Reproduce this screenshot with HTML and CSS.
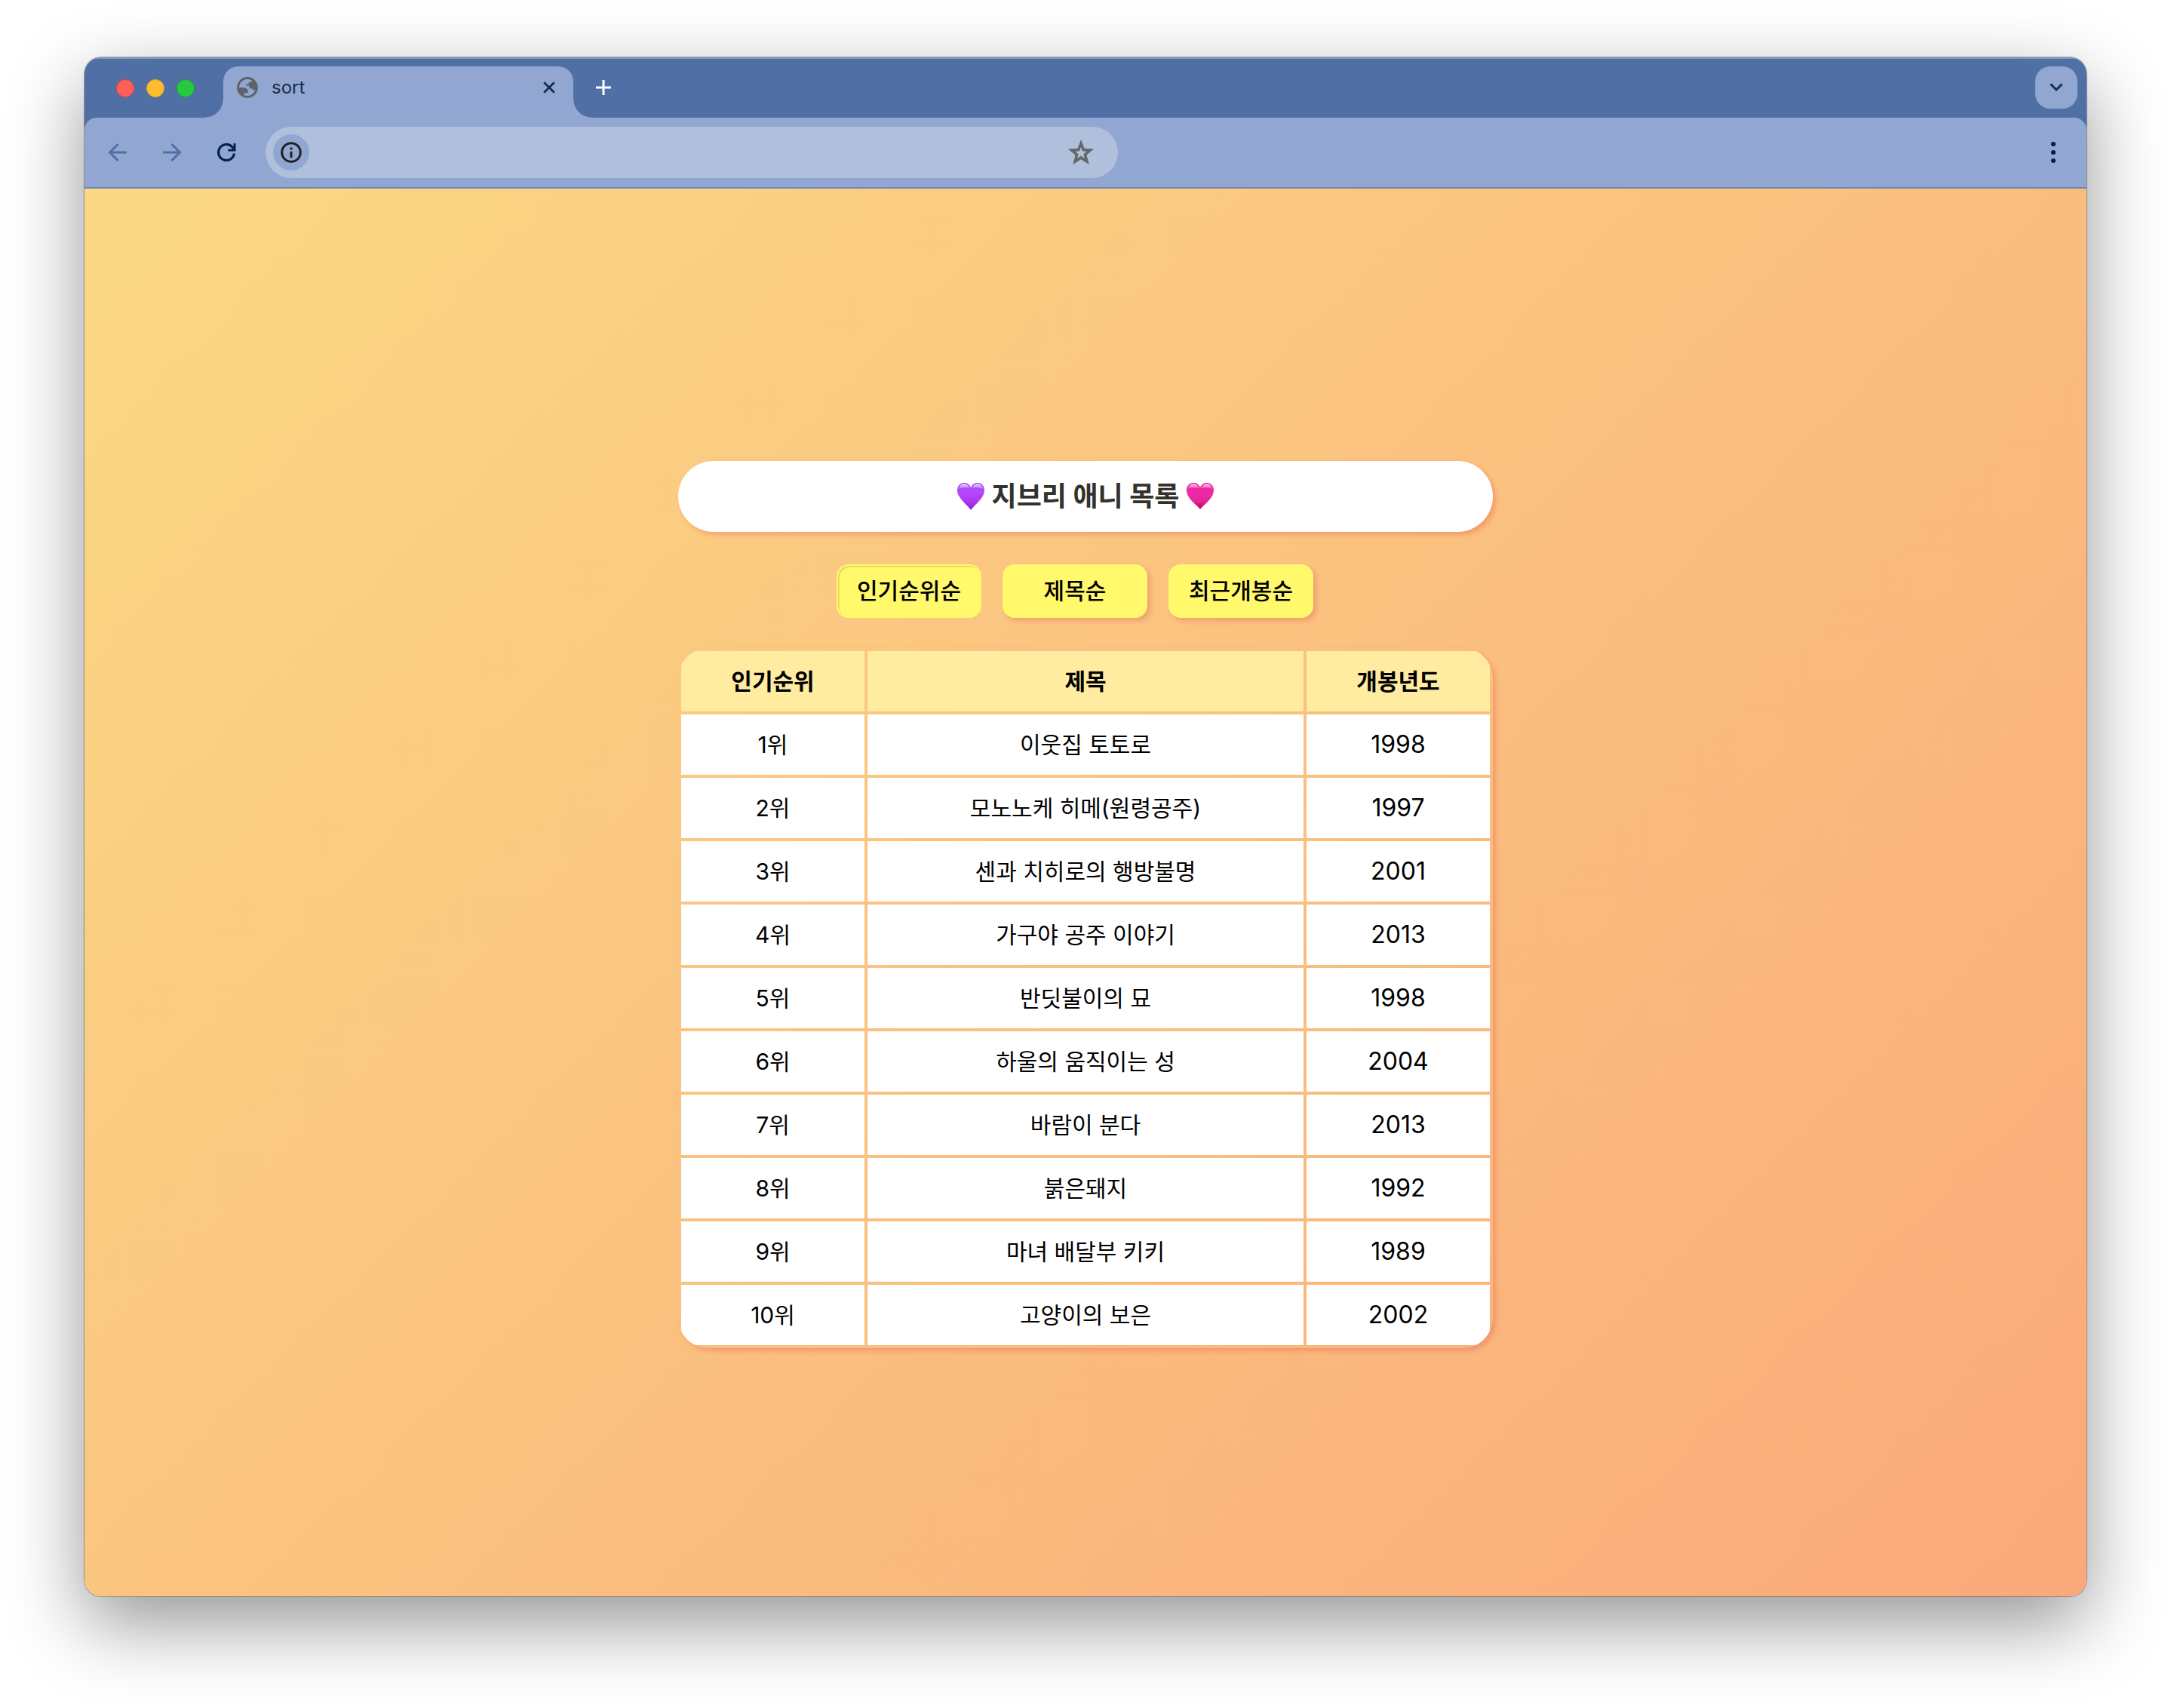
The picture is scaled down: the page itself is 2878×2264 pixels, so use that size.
FILE: index.html
```html
<!DOCTYPE html>
<html lang="ko">
<head>
<meta charset="utf-8">
<meta name="viewport" content="width=device-width, initial-scale=1">
<title>sort</title>
<link rel="stylesheet" href="styles.css">
</head>
<body>
<div class="window">
  <header class="chrome">
    <div class="tabbar">
      <div class="lights">
        <span class="light light-red"></span>
        <span class="light light-yellow"></span>
        <span class="light light-green"></span>
      </div>
      <div class="tab">
        <svg class="globe" viewBox="0 0 28 28" aria-hidden="true">
          <circle cx="14" cy="14" r="12.4" fill="none" stroke="currentColor" stroke-width="3"/>
          <path fill="currentColor" d="M1.500 14h7.200q5.800.200 6 5v2.300h-5v4.200C5 24 2 19.500 1.500 14zM20 3v1.600q-.300 2.400-3 2.400h-1.500v2.500h-3.300v2.300h4.300v3.400h2.300q2 0 2.800 2.300h2.900c2.500-5 1.500-11-4.500-14.500z"/>
        </svg>
        <span class="tab-title">sort</span>
        <button class="icon-button tab-close" type="button" aria-label="탭 닫기">
          <svg width="16" height="16" viewBox="0 0 16 16"><path d="M1.200 1.200l13.600 13.600M14.800 1.200L1.200 14.800" fill="none" stroke="currentColor" stroke-width="2.800"/></svg>
        </button>
      </div>
      <button class="icon-button new-tab" type="button" aria-label="새 탭">
        <svg width="20" height="20" viewBox="0 0 20 20"><path d="M10 0v20M0 10h20" fill="none" stroke="currentColor" stroke-width="3"/></svg>
      </button>
      <button class="icon-button tab-search" type="button" aria-label="탭 검색">
        <svg width="18" height="12" viewBox="0 0 18 12"><path d="M1.500 1.500L9 9l7.500-7.500" fill="none" stroke="currentColor" stroke-width="3"/></svg>
      </button>
    </div>
    <div class="toolbar">
      <button class="icon-button nav-button muted" type="button" aria-label="뒤로">
        <svg width="26" height="26" viewBox="0 0 26 26"><path d="M25 13H3M13.500 2L2.500 13l11 11" fill="none" stroke="currentColor" stroke-width="3"/></svg>
      </button>
      <button class="icon-button nav-button muted" type="button" aria-label="앞으로">
        <svg width="26" height="26" viewBox="0 0 26 26"><path d="M1 13h22M12.500 2l11 11-11 11" fill="none" stroke="currentColor" stroke-width="3"/></svg>
      </button>
      <button class="icon-button nav-button" type="button" aria-label="새로고침">
        <svg width="26" height="26" viewBox="0 0 26 26"><path d="M23.500 14.500A10.500 10.500 0 1 1 20.600 5.600L23 8" fill="none" stroke="currentColor" stroke-width="3.200"/><path d="M25.500 1v10.500H15.300V8.700h7.200V1z" fill="currentColor"/></svg>
      </button>
      <div class="address">
        <button class="icon-button site-info" type="button" aria-label="사이트 정보">
          <svg width="28" height="28" viewBox="0 0 28 28"><circle cx="14" cy="14" r="12.300" fill="none" stroke="currentColor" stroke-width="3"/><path d="M12.500 12.700h3V21h-3zM12.500 7.500h3v3h-3z" fill="currentColor"/></svg>
        </button>
        <input class="address-input" type="text" aria-label="주소">
        <button class="icon-button bookmark" type="button" aria-label="북마크">
          <svg width="34" height="34" viewBox="0 0 34 34"><path fill="currentColor" fill-rule="evenodd" d="M17 0l4.500 11.700 12.500.900-9.600 7.900 3.300 12.500L17 26.300 6.300 33l3.300-12.500L0 12.600l12.500-.900zM17 10l-2.200 5.200-5.300.500 4 3.600-1.200 5.500 4.700-3 4.700 3-1.200-5.500 4-3.600-5.300-.500z"/></svg>
        </button>
      </div>
      <button class="icon-button nav-button menu-button" type="button" aria-label="메뉴">
        <svg width="6" height="28" viewBox="0 0 6 28" fill="currentColor"><circle cx="3" cy="3" r="3"/><circle cx="3" cy="14" r="3"/><circle cx="3" cy="25" r="3"/></svg>
      </button>
    </div>
  </header>
  <main class="page">
    <div class="content">
      <h1 class="title">
        <svg class="heart" viewBox="0 0 36 36" aria-hidden="true">
          <defs>
            <linearGradient id="purple" x1="0" y1="0" x2="0" y2="1"><stop offset="0" stop-color="#a34df0"/><stop offset=".35" stop-color="#b548fb"/><stop offset=".7" stop-color="#ae36f0"/><stop offset="1" stop-color="#8420cc"/></linearGradient>
            <linearGradient id="shine" x1="0" y1="0" x2="0" y2="1"><stop offset="0" stop-color="#fff" stop-opacity=".8"/><stop offset="1" stop-color="#fff" stop-opacity="0"/></linearGradient>
          </defs>
          <path fill="url(#purple)" d="M18 36C12 28 0 20 0 10 0 4 4 0 9 0c4.500 0 7.600 2.600 9 6.500C19.400 2.600 22.500 0 27 0c5 0 9 4 9 10 0 10-12 18-18 26z"/>
          <path fill="url(#shine)" d="M2 9c0-4.500 3-7.500 7-7.500s6.500 2.500 7.500 6.500C13 6 6 6 2 9zM34 9c0-4.500-3-7.500-7-7.500S20.500 4 19.500 8C23 6 30 6 34 9z"/>
        </svg>
        <span>지브리 애니 목록</span>
        <svg class="heart" viewBox="0 0 36 36" aria-hidden="true">
          <defs>
            <linearGradient id="pink" x1="0" y1="0" x2="0" y2="1"><stop offset="0" stop-color="#e81fa0"/><stop offset=".4" stop-color="#ef29a9"/><stop offset=".7" stop-color="#e2259a"/><stop offset="1" stop-color="#c00060"/></linearGradient>
          </defs>
          <path fill="url(#pink)" d="M18 35C12 28 0 20 0 10 0 4 4 0 9 0c4.500 0 7.600 2.600 9 6.500C19.400 2.600 22.500 0 27 0c5 0 9 4 9 10 0 10-12 18-18 25z"/>
          <path fill="url(#shine)" d="M2 9c0-4.500 3-7.500 7-7.500s6.500 2.500 7.500 6.500C13 6 6 6 2 9zM34 9c0-4.500-3-7.500-7-7.500S20.500 4 19.500 8C23 6 30 6 34 9z"/>
        </svg>
      </h1>
      <div class="sort-buttons">
        <button class="sort-button active" type="button">인기순위순</button>
        <button class="sort-button" type="button">제목순</button>
        <button class="sort-button" type="button">최근개봉순</button>
      </div>
      <table class="list">
        <colgroup><col class="col-side"><col><col class="col-side"></colgroup>
        <thead>
          <tr><th scope="col">인기순위</th><th scope="col">제목</th><th scope="col">개봉년도</th></tr>
        </thead>
        <tbody>
          <tr><td>1위</td><td>이웃집 토토로</td><td>1998</td></tr>
          <tr><td>2위</td><td>모노노케 히메(원령공주)</td><td>1997</td></tr>
          <tr><td>3위</td><td>센과 치히로의 행방불명</td><td>2001</td></tr>
          <tr><td>4위</td><td>가구야 공주 이야기</td><td>2013</td></tr>
          <tr><td>5위</td><td>반딧불이의 묘</td><td>1998</td></tr>
          <tr><td>6위</td><td>하울의 움직이는 성</td><td>2004</td></tr>
          <tr><td>7위</td><td>바람이 분다</td><td>2013</td></tr>
          <tr><td>8위</td><td>붉은돼지</td><td>1992</td></tr>
          <tr><td>9위</td><td>마녀 배달부 키키</td><td>1989</td></tr>
          <tr><td>10위</td><td>고양이의 보은</td><td>2002</td></tr>
        </tbody>
      </table>
    </div>
  </main>
</div>
</body>
</html>
```
FILE: styles.css
```css
* {
  box-sizing: border-box;
}

body {
  margin: 0;
  min-height: 100vh;
  padding: 76px 112px 148px;
  display: flex;
  background: #fff;
  color: #000;
  font-family: Inter, "Noto Sans CJK KR", sans-serif;
  font-size: 30px;
}

button {
  margin: 0;
  padding: 0;
  border: 0;
  background: none;
  color: inherit;
  font: inherit;
}

.window {
  flex: 1;
  min-width: 0;
  display: flex;
  flex-direction: column;
  overflow: hidden;
  border-radius: 22px;
  box-shadow: 0 0 0 1px rgba(0, 0, 0, .3), 0 36px 100px rgba(0, 0, 0, .42);
}

/* Browser chrome */

.chrome {
  background: #506fa5;
  color: #00204f;
  box-shadow: inset 0 2px 0 #8298c0;
}

.tabbar {
  display: flex;
  align-items: flex-start;
  padding: 12px 12px 0 42px;
}

.icon-button {
  display: flex;
  flex: none;
  align-items: center;
  justify-content: center;
}

.lights {
  display: flex;
  align-items: center;
  gap: 16px;
  height: 58px;
}

.light {
  width: 24px;
  height: 24px;
  border: 1px solid;
  border-radius: 50%;
}

.light-red {
  background: #ff5f57;
  border-color: #e2463f;
}

.light-yellow {
  background: #febc2e;
  border-color: #dfa023;
}

.light-green {
  background: #28c840;
  border-color: #1aab29;
}

.tab {
  position: relative;
  display: flex;
  align-items: center;
  width: 464px;
  height: 68px;
  margin-left: 38px;
  padding: 0 24px 12px 18px;
  border-radius: 20px 20px 0 0;
  background: #91a7d1;
  color: #1b2c4b;
}

/* Concave feet of the active tab */
.tab::before,
.tab::after {
  content: "";
  position: absolute;
  bottom: 0;
  width: 24px;
  height: 24px;
}

.tab::before {
  right: 100%;
  background: radial-gradient(circle at 0 0, transparent 23px, #91a7d1 24px);
}

.tab::after {
  left: 100%;
  background: radial-gradient(circle at 100% 0, transparent 23px, #91a7d1 24px);
}

.globe {
  flex: none;
  width: 28px;
  height: 28px;
  color: #5f6368;
}

.tab-title {
  flex: 1;
  margin-left: 18px;
  font-size: 24px;
  line-height: 28px;
}

.new-tab {
  width: 56px;
  height: 56px;
  margin-left: 12px;
  color: #fff;
}

.tab-search {
  width: 56px;
  height: 56px;
  margin-left: auto;
  border-radius: 20px;
  background: #91a7d1;
  color: #1b2c4b;
}

.toolbar {
  display: flex;
  align-items: center;
  gap: 24px;
  padding: 12px 20px;
  border-bottom: 2px solid #6d88b5;
  border-radius: 16px 16px 0 0;
  background: #91a7d1;
}

.nav-button {
  width: 48px;
  height: 48px;
}

.muted {
  color: #506fa5;
}

.address {
  display: flex;
  align-items: center;
  flex: 0 1 1130px;
  min-width: 0;
  height: 68px;
  margin-left: 4px;
  padding: 0 32px 0 10px;
  border-radius: 34px;
  background: #afbfdc;
}

.site-info {
  width: 48px;
  height: 48px;
  border-radius: 50%;
  background: #91a7d1;
  color: #202124;
}

.address-input {
  flex: 1;
  min-width: 0;
  height: 48px;
  padding: 0 12px;
  border: 0;
  outline: 0;
  background: none;
  color: inherit;
  font: inherit;
}

.bookmark {
  color: #646668;
}

.menu-button {
  margin-left: auto;
}

/* Page */

.page {
  flex: 1;
  display: flex;
  align-items: center;
  justify-content: center;
  padding: 32px 20px 0;
  background: linear-gradient(135deg, #fbd984, #faa97a);
}

.content {
  width: 100%;
  max-width: 1080px;
}

.title {
  display: flex;
  align-items: center;
  justify-content: center;
  gap: 10px;
  margin: 0;
  padding: 20px;
  border-radius: 50px;
  background: #fff;
  box-shadow: 4px 4px 6px rgba(224, 76, 76, .3);
  color: #33322c;
  font-size: 36px;
  font-weight: 700;
  line-height: 54px;
}

.heart {
  flex: none;
  width: 36px;
  height: 36px;
}

.sort-buttons {
  display: flex;
  justify-content: center;
  margin: 43px 0 40px;
}

.sort-button {
  width: 192px;
  height: 71px;
  margin-right: 28px;
  padding-bottom: 6px;
  border: 2px solid #fff96b;
  border-radius: 16px;
  background: #fff96b;
  box-shadow: 4px 4px 6px rgba(224, 76, 76, .3);
  color: #000;
  font-weight: 500;
}

.sort-button.active {
  box-shadow: inset 2px 2px 0 rgba(0, 0, 0, .1);
}

.list {
  width: 100%;
  table-layout: fixed;
  border-collapse: separate;
  border-spacing: 4px;
  overflow: hidden;
  border-radius: 40px;
  box-shadow: 4px 4px 6px rgba(224, 76, 76, .3);
}

.col-side {
  width: 243px;
}

.list th,
.list td {
  height: 80px;
  padding: 0;
  text-align: center;
  line-height: 40px;
}

.list th {
  background: #ffeca1;
  font-weight: 700;
}

.list td {
  background: #fff;
}

.list td:last-child {
  font-size: 32px;
}
```
